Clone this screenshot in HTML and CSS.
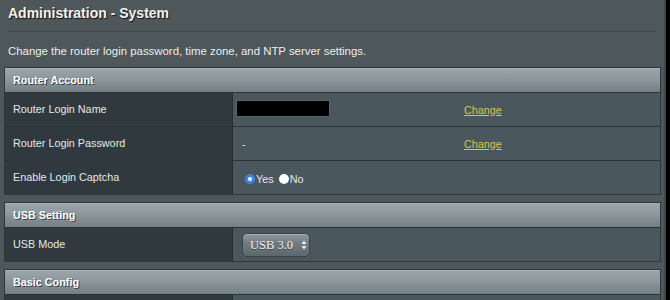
FILE: index.html
```html
<!DOCTYPE html>
<html>
<head>
<meta charset="utf-8">
<link rel="stylesheet" href="styles.css">
</head>
<body>
<div class="page">
  <div class="main">
    <h1 class="title">Administration - System</h1>
    <div class="rule"></div>
    <p class="desc">Change the router login password, time zone, and NTP server settings.</p>

    <div class="section">
      <div class="head">Router Account</div>
      <div class="row">
        <div class="label">Router Login Name</div>
        <div class="value">
          <div class="slot"><span class="blackbox"></span></div>
          <a class="change" href="#">Change</a>
        </div>
      </div>
      <div class="row">
        <div class="label">Router Login Password</div>
        <div class="value">
          <div class="slot"><span class="dash">-</span></div>
          <a class="change" href="#">Change</a>
        </div>
      </div>
      <div class="row">
        <div class="label">Enable Login Captcha</div>
        <div class="value">
          <div class="radios">
            <span class="radio on"></span><span class="rlabel">Yes</span>
            <span class="radio off"></span><span class="rlabel">No</span>
          </div>
        </div>
      </div>
    </div>

    <div class="section">
      <div class="head">USB Setting</div>
      <div class="row">
        <div class="label">USB Mode</div>
        <div class="value">
          <div class="select">
            <span class="seltext">USB 3.0</span>
            <svg class="arrows" width="6" height="10" viewBox="0 0 6 10"><path d="M3 0.5 L5.6 4 H0.4 Z M3 9.5 L5.6 6 H0.4 Z" fill="#e9ecee"/></svg>
          </div>
        </div>
      </div>
    </div>

    <div class="section">
      <div class="head">Basic Config</div>
      <div class="row">
        <div class="label"></div>
        <div class="value"></div>
      </div>
    </div>
  </div>
  <div class="edge"></div>
</div>
</body>
</html>
```

FILE: styles.css
```css
html, body {
  margin: 0;
  padding: 0;
  background: #000;
  height: 300px;
  overflow: hidden;
}
.page {
  display: flex;
  height: 300px;
  overflow: hidden;
  font-family: "Liberation Sans", Arial, sans-serif;
}
.main {
  width: 664px;
  height: 300px;
  overflow: hidden;
  background: #4e5759;
  padding: 0 0 0 4px;
  box-sizing: border-box;
}
.edge {
  width: 2px;
  background: #40484b;
}
.title {
  margin: 0;
  padding: 5px 0 0 4px;
  height: 20px;
  font-size: 14px;
  font-weight: bold;
  color: #f2f2f2;
  text-shadow: 1px 1px 1px #111;
  line-height: 17px;
}
.rule {
  margin: 6px 0 0 3px;
  width: 650px;
  height: 1px;
  background: #434b4e;
}
.desc {
  margin: 0;
  padding: 12px 0 0 4px;
  height: 17px;
  font-size: 11.4px;
  line-height: 15px;
  color: #eceeee;
}
.section {
  width: 657px;
  border: 1px solid #30373a;
  margin-top: 6px;
  box-sizing: border-box;
}
.section + .section {
  margin-top: 7px;
}
.head {
  height: 24px;
  line-height: 24px;
  padding-left: 8px;
  font-size: 10.8px;
  font-weight: bold;
  color: #fff;
  text-shadow: 1px 1px 0 #3a4346;
  background: linear-gradient(to bottom, #9ca6ab 0%, #8b969b 50%, #747f85 100%);
  box-shadow: inset 0 1px 0 #a8b1b5;
}
.row {
  display: grid;
  grid-template-columns: 228px 1fr;
  height: 33px;
  border-top: 1px solid #2c3336;
}
.label {
  background: #30393d;
  border-right: 1px solid #262d30;
  padding-left: 8px;
  font-size: 10.8px;
  line-height: 33px;
  color: #e6e8e9;
}
.value {
  background: #4a575c;
  display: flex;
  align-items: center;
  padding-left: 3px;
  font-size: 10.8px;
  color: #e6e8e9;
}
.slot {
  width: 228px;
  display: flex;
  align-items: center;
}
.blackbox {
  display: block;
  width: 94px;
  height: 17px;
  background: #000;
  border: 1px solid #55636a;
  box-sizing: border-box;
  margin-top: -2px;
}
.dash {
  margin-left: 6px;
}
.change {
  color: #d8c44c;
  text-decoration: underline;
  font-size: 10.8px;
}
.radios {
  display: flex;
  align-items: center;
  margin-left: 9px;
  margin-top: 2px;
}
.radio {
  width: 10px;
  height: 10px;
  border-radius: 50%;
  box-sizing: border-box;
  flex-shrink: 0;
}
.radio.on {
  background: #3b82f6;
  border: 3px solid #3b82f6;
  position: relative;
}
.radio.on::after {
  content: "";
  position: absolute;
  left: 0;
  top: 0;
  width: 4px;
  height: 4px;
  border-radius: 50%;
  background: #fff;
}
.radio.off {
  background: #fff;
  margin-left: 5px;
}
.rlabel {
  margin-left: 1px;
}
.select {
  margin-left: 6px;
  width: 68px;
  height: 24px;
  box-sizing: border-box;
  border-radius: 5px;
  border: 1px solid #3a4448;
  background: linear-gradient(to bottom, #8c989d 0%, #6f7b81 45%, #5c676c 100%);
  box-shadow: inset 0 1px 0 #a3adb1;
  display: flex;
  align-items: center;
  padding-left: 7px;
  margin-top: 1px;
  white-space: nowrap;
}
.seltext {
  font-family: "Liberation Serif", "Times New Roman", serif;
  font-size: 12.5px;
  color: #f4f5f5;
  text-shadow: 0 1px 0 #3c4549;
  white-space: nowrap;
  flex-shrink: 0;
}
.arrows {
  margin-left: 8px;
  flex-shrink: 0;
}
```
